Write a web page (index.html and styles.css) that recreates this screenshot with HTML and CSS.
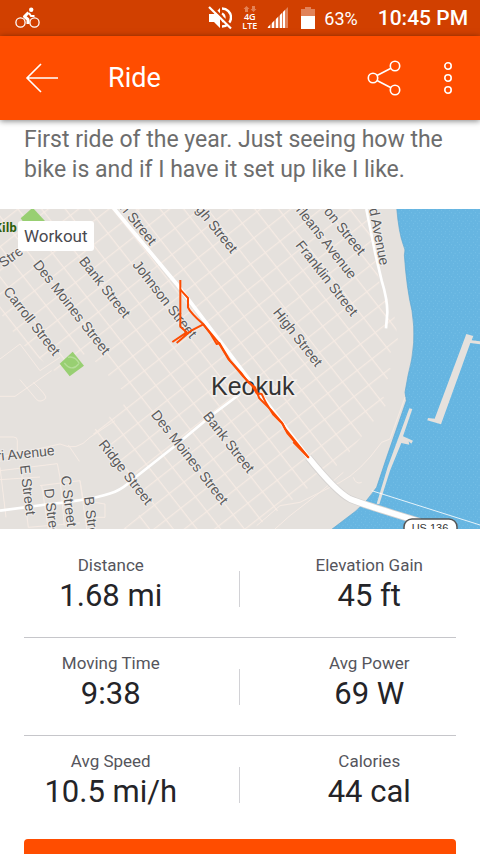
FILE: index.html
```html
<!DOCTYPE html>
<html lang="en">
<head>
    <meta charset="UTF-8">
    <meta name="viewport" content="width=device-width, initial-scale=1.0">
    <title>Ride</title>
    <link rel="stylesheet" href="styles.css">
</head>
<body>
    <div class="status">
        <svg class="status-bike" width="26" height="22" viewBox="0 0 26 22" fill="none" stroke="#fff">
            <circle cx="5.5" cy="15.5" r="4.6" stroke-width="1.3"/>
            <circle cx="19.5" cy="15.5" r="4.6" stroke-width="1.3"/>
            <circle cx="16.2" cy="2.8" r="2.2" fill="#fff" stroke="none"/>
            <path d="M13.5 5.5L9.5 9.5L13 12.5V17" stroke-width="3" stroke-linejoin="round"/>
            <path d="M14 6L16 9H19.5" stroke-width="1.8"/>
        </svg>
        <div class="status-right">
            <svg width="24" height="24" viewBox="0 0 24 24">
                <path d="M1 8H6L12 2V22L6 16H1Z" fill="#fff"/>
                <path d="M14 2.5A9 9 0 0 1 14 20.5M14 7.5A4.5 4.5 0 0 1 14 15.5" fill="none" stroke="#fff" stroke-width="2.4"/>
                <path d="M3 0L24 21" stroke="#d14000" stroke-width="2.5"/>
                <path d="M1 1L23 22.5" stroke="#fff" stroke-width="2.2"/>
            </svg>
            <div class="network">
                <svg width="14" height="6" viewBox="0 0 14 6" fill="#e48255">
                    <path d="M3.5 0L6.5 3H5V6H2V3H.5ZM9 0H12V3H13.5L10.5 6L7.5 3H9Z"/>
                </svg>
                <span>4G</span>
                <span>LTE</span>
            </div>
            <svg class="signal" width="22" height="22" viewBox="0 0 22 22" fill="#fff">
                <path d="M0 21L21 0V21Z" opacity=".35"/>
                <path d="M1 21V20L3 18V21ZM5 21V16L7 14V21ZM9 21V12L11 10V21ZM13 21V8L15 6V21ZM16 21V5L18 3V21Z"/>
            </svg>
            <svg class="battery" width="14" height="22" viewBox="0 0 14 22" fill="#fff">
                <path d="M4 0H10V2H14V9H0V2H4Z" opacity=".35"/>
                <path d="M0 9H14V22H0Z"/>
            </svg>
            <span class="percent">63%</span>
            <span class="time">10:45 PM</span>
        </div>
    </div>
    <header class="bar">
        <button class="icon-btn" aria-label="Back">
            <svg width="34" height="30" viewBox="0 0 34 30" fill="none" stroke="#fff" stroke-width="1.6">
                <path d="M16 1L2 15L16 29M2 15H33"/>
            </svg>
        </button>
        <h1>Ride</h1>
        <button class="icon-btn share" aria-label="Share">
            <svg width="34" height="36" viewBox="0 0 34 36" fill="none" stroke="#fff" stroke-width="1.6">
                <circle cx="6" cy="18" r="4.7"/>
                <circle cx="28" cy="6" r="4.7"/>
                <circle cx="28" cy="30" r="4.7"/>
                <path d="M10 15.5L24 8.3M10 20.5L24 27.7"/>
            </svg>
        </button>
        <button class="icon-btn" aria-label="More options">
            <svg width="10" height="34" viewBox="0 0 10 34" fill="none" stroke="#fff" stroke-width="1.6">
                <circle cx="5" cy="5" r="3.2"/>
                <circle cx="5" cy="17" r="3.2"/>
                <circle cx="5" cy="29" r="3.2"/>
            </svg>
        </button>
    </header>
    <main>
        <p class="desc">First ride of the year. Just seeing how the bike is and if I have it set up like I like.</p>
        <div class="map">
            <svg class="map-svg" viewBox="0 0 480 320">
                <defs>
                    <pattern id="blocks" width="56" height="56" patternUnits="userSpaceOnUse" patternTransform="translate(610 345) rotate(52)">
                        <path d="M0 2H56M2 0V56" stroke="#f6ebe4" stroke-width="3.4"/>
                    </pattern>
                    <pattern id="waves" width="24" height="24" patternUnits="userSpaceOnUse">
                        <path d="M3 4H6M14 2H16M9 11H12M20 13H23M4 19H6M15 20H18" stroke="#7cc2e9" stroke-width="2"/>
                    </pattern>
                </defs>
                <g transform="scale(.33333)">
                    <!-- river -->
                    <path d="M0 0H1440V960H0Z" fill="#66b5e1"/>
                    <path d="M980 0H1440V960H980Z" fill="url(#waves)"/>
                    <!-- land -->
                    <path d="M-5 -5H1190Q1196 70 1210 108Q1218 122 1213 138Q1220 240 1236 305Q1252 400 1224 500L1215 550L1219 575L1160 745L1130 835Q1100 880 1065 908L990 965H-5Z" fill="#e5e1dd" stroke="#5ba5cf" stroke-width="2"/>
                    <!-- breakwater and lock -->
                    <path d="M1399 375L1420 381L1415 394L1440 397V406L1411 402L1323 646L1282 634L1284 627L1304 629Z" fill="#e5e1dd"/>
                    <path d="M1228 598L1237 600L1209 682L1239 695L1234 704L1226 697L1228 707L1204 702L1170 785L1138 886L1130 884L1163 774Z" fill="#e5e1dd"/>
                    <!-- city blocks -->
                    <path d="M0 0H1100L1140 230L1180 300L1195 400L1150 460L1185 490L1130 540L1165 580L1040 740L1000 780L840 900L760 960H370L450 890L275 670L390 570L260 430L180 500L60 400L0 310Z" fill="url(#blocks)"/>
                    <!-- parks -->
                    <path d="M62 28L98 -4L137 38L110 60H85Z" fill="#98cf72"/>
                    <path d="M179 464L218 428L252 470L209 502Z" fill="#98cf72"/>
                    <path d="M193 462Q215 490 236 465M204 445Q225 440 238 464" fill="none" stroke="#b5dd99" stroke-width="4"/>
                    <!-- side roads -->
                    <g fill="none" stroke="#f6ebe4" stroke-width="3">
                        <path d="M0 450L60 405L120 485L180 445M0 562H45L155 485M60 512L110 572Q122 582 137 568Q142 560 100 520"/>
                        <path d="M0 745L180 705Q230 730 270 685L345 635M205 708L238 757M0 684H40Q52 684 52 694V730"/>
                        <path d="M0 785L172 764L180 805L193 950M0 812L120 804M0 775L18 925M62 770L85 955L240 942M120 830L240 815L250 875L315 885V925H255M125 830L145 960M240 815L260 960"/>
                        <path d="M1215 565L1170 690L1145 700Q1080 790 1020 820L900 880L840 890L770 950M1060 805Q1068 828 1085 820"/>
                        <path d="M825 960L870 920L960 850L1030 790"/>
                    </g>
                    <!-- main roads -->
                    <g fill="none" stroke="#fff">
                        <path d="M0 905L150 885Q290 870 345 848Q370 838 400 810L520 715L640 615L720 555" stroke-width="8"/>
                        <path d="M1099 0L1125 130L1145 215Q1162 270 1162 310L1158 358" stroke-width="8"/>
                        <path d="M338 -6L530 225L925 745" stroke-width="11"/>
                        <path d="M925 745Q1010 850 1050 870Q1100 890 1260 938" stroke="#d6d3d1" stroke-width="22"/>
                        <path d="M925 745Q1010 850 1050 870Q1100 890 1260 938" stroke-width="17"/>
                        <path d="M1115 845L1440 948" stroke-width="2.5"/>
                    </g>
                </g>
                <g class="streets">
                    <text x="150" y="37" text-anchor="end" transform="rotate(51 150 37)">n Street</text>
                    <text x="231" y="45" text-anchor="end" transform="rotate(51 231 45)">gh Street</text>
                    <text x="359" y="47" text-anchor="end" transform="rotate(51 359 47)">on Street</text>
                    <text x="350" y="71" text-anchor="end" transform="rotate(52 350 71)">rleans Avenue</text>
                    <text x="380" y="57" text-anchor="end" transform="rotate(79 380 57)">d Avenue</text>
                    <g text-anchor="middle">
                        <text transform="translate(327 69) rotate(52)" dy="5">Franklin Street</text>
                        <text transform="translate(298 128) rotate(52)" dy="5">High Street</text>
                        <text transform="translate(165 90) rotate(52)" dy="5">Johnson Street</text>
                        <text transform="translate(105 78) rotate(52)" dy="5">Bank Street</text>
                        <text transform="translate(72 98) rotate(52)" dy="5">Des Moines Street</text>
                        <text transform="translate(32 112) rotate(52)" dy="5">Carroll Street</text>
                        <text transform="translate(126 263) rotate(52)" dy="5">Ridge Street</text>
                        <text transform="translate(190 248) rotate(52)" dy="5">Des Moines Street</text>
                        <text transform="translate(229 233) rotate(52)" dy="5">Bank Street</text>
                        <text transform="translate(28 281) rotate(83)" dy="5">E Street</text>
                        <text transform="translate(69 292) rotate(83)" dy="5">C Street</text>
                    </g>
                    <text transform="translate(44 280) rotate(83)">D Street</text>
                    <text transform="translate(84 288) rotate(83)">B Street</text>
                    <text transform="translate(-4 64) rotate(-35)">r Stre</text>
                    <text x="55" y="246" text-anchor="end" transform="rotate(-6 55 246)">ri Avenue</text>
                </g>
                <text class="park" x="-6" y="23">Kilb</text>
                <text class="city" x="211" y="186">Keokuk</text>
                <rect x="404" y="310" width="53" height="22" rx="8" fill="#fff" stroke="#555" stroke-width="1.5"/>
                <text class="route-no" x="430" y="323" text-anchor="middle">US 136</text>
                <!-- ride track -->
                <g transform="scale(.33333)" fill="none" stroke="#fc4c02" stroke-width="6" stroke-linejoin="round">
                    <path d="M541 213V353L560 370L517 399M530 402L575 364L610 346L655 400L685 450L722 490L745 520L765 535L778 568L812 602L845 640L862 672L890 705L925 745"/>
                    <path d="M541 242L564 267V295Q570 310 610 346L632 375L650 405L658 402L690 455L730 503L757 530L770 553L785 555L797 580L820 617L848 645L856 660L925 745L880 699"/>
                </g>
            </svg>
            <span class="tag">Workout</span>
        </div>
        <dl class="stats">
            <div class="row">
                <div class="stat"><dt>Distance</dt><dd>1.68 mi</dd></div>
                <div class="stat"><dt>Elevation Gain</dt><dd>45 ft</dd></div>
            </div>
            <div class="row">
                <div class="stat"><dt>Moving Time</dt><dd>9:38</dd></div>
                <div class="stat"><dt>Avg Power</dt><dd>69 W</dd></div>
            </div>
            <div class="row">
                <div class="stat"><dt>Avg Speed</dt><dd>10.5 mi/h</dd></div>
                <div class="stat"><dt>Calories</dt><dd>44 cal</dd></div>
            </div>
        </dl>
        <button class="action" aria-label="View analysis"></button>
    </main>
</body>
</html>
```
FILE: styles.css
```css
* {
    box-sizing: border-box;
    margin: 0;
    padding: 0;
}
body {
    display: flex;
    flex-direction: column;
    height: 100vh;
    overflow: hidden;
    font-family: Roboto, sans-serif;
    background: #fff;
}
svg {
    display: block;
    flex: none;
}
.status {
    flex: none;
    display: flex;
    align-items: center;
    justify-content: space-between;
    height: 36px;
    padding: 0 12px 0 15px;
    color: #fff;
    background: #d14000;
}
.status-right {
    display: flex;
    align-items: center;
}
.network {
    display: flex;
    flex-direction: column;
    align-items: center;
    margin: 0 10px;
    font: 600 9px/9px "Open Sans", sans-serif;
}
.battery {
    margin: 0 9px 0 12px;
}
.percent {
    font-size: 18px;
}
.time {
    margin-left: 20px;
    font-size: 21px;
    font-weight: 500;
}
.bar {
    position: relative;
    z-index: 1;
    flex: none;
    display: flex;
    align-items: center;
    height: 84px;
    padding: 0 27px 0 25px;
    color: #fff;
    background: #ff4d00;
    box-shadow: 0 1px 6px rgba(0, 0, 0, .5);
}
.bar h1 {
    margin-left: 49px;
    font-size: 27px;
    font-weight: 400;
}
.icon-btn {
    border: 0;
    background: none;
}
.share {
    margin: 0 42px 0 auto;
}
main {
    flex: 1;
    min-height: 0;
    overflow: hidden;
}
.desc {
    padding: 5px 24px 24px;
    font-size: 23px;
    line-height: 30px;
    color: #6d6d6d;
}
.map {
    position: relative;
}
.map-svg {
    width: 100%;
    font-family: "Liberation Sans", sans-serif;
}
.streets {
    font-size: 14px;
    fill: #5a5a5a;
    stroke: #efecea;
    stroke-width: 2px;
    paint-order: stroke;
}
.park {
    font: bold 12px "Open Sans", sans-serif;
    fill: #2d5f0c;
}
.city {
    font-size: 25px;
    fill: #333;
    stroke: #f3f0ee;
    stroke-width: 3px;
    paint-order: stroke;
}
.route-no {
    font-size: 11px;
    fill: #333;
}
.tag {
    position: absolute;
    top: 12px;
    left: 18px;
    padding: 0 6px;
    font-size: 17px;
    line-height: 30px;
    color: #494950;
    background: #fff;
    border-radius: 3px;
}
.stats {
    padding: 11px 24px 0;
}
.row {
    position: relative;
    display: flex;
    gap: 85px;
    height: 98px;
    padding-top: 13px;
    border-bottom: 1px solid #c6c6ca;
}
.row:last-child {
    border-bottom: 0;
}
.row::after {
    content: "";
    position: absolute;
    top: 31px;
    left: calc(50% - 1px);
    height: 36px;
    border-left: 1px solid #d2d2d6;
}
.stat {
    flex: 1;
    text-align: center;
    white-space: nowrap;
}
dt {
    font-size: 17px;
    line-height: 24px;
    color: #55555c;
}
dd {
    font-size: 31px;
    line-height: 38px;
    color: #242428;
}
.action {
    display: block;
    width: calc(100% - 48px);
    height: 60px;
    margin: 5px 24px 24px;
    border: 0;
    border-radius: 4px;
    background: #ff4d00;
}
```
